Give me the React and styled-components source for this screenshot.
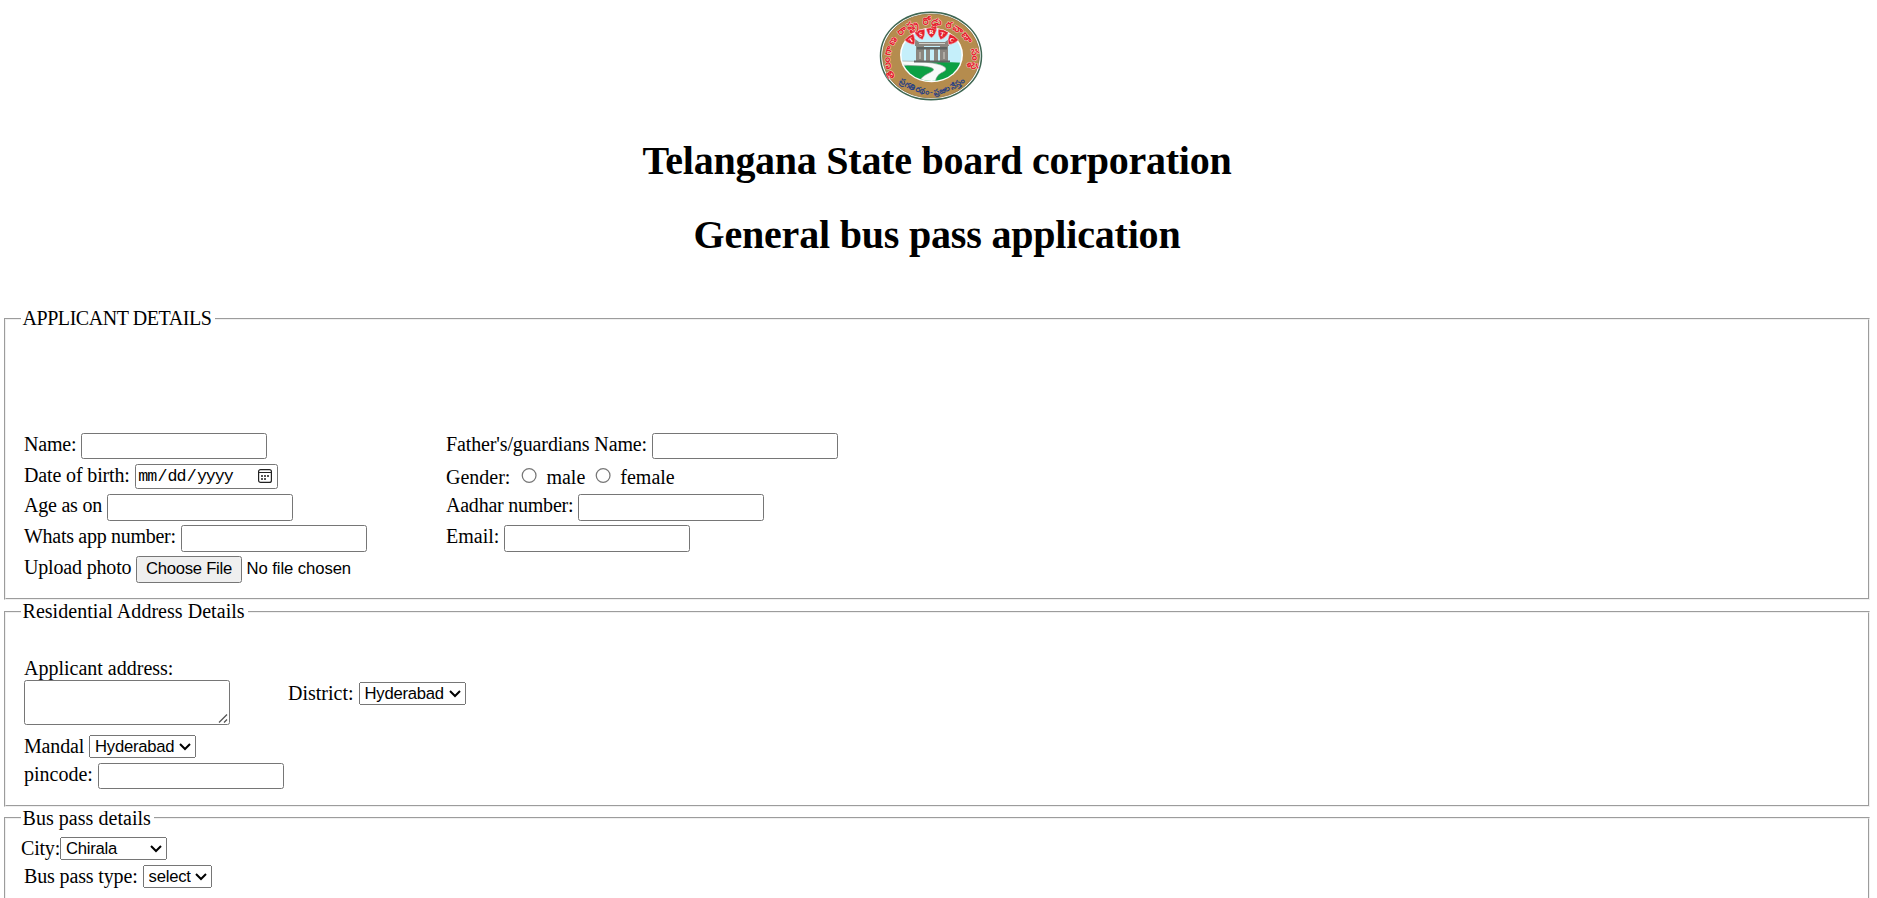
import React from 'react';
import styled, { createGlobalStyle, css } from 'styled-components';

const Global = createGlobalStyle`
  body {
    margin: 0;
    background: #fff;
    color: #000;
    font-family: "Liberation Serif", "Times New Roman", serif;
    font-size: 20px;
    line-height: 23px;
    overflow: hidden;
  }
`;

const Page = styled.main`
  height: 898px;
  overflow: hidden;
  box-sizing: border-box;
  padding: 10px 7px 0 4px;
`;

const Header = styled.header`
  display: flex;
  flex-direction: column;
  align-items: center;
  height: 297px;
`;

const Seal = styled.svg`
  width: 106px;
  height: 92px;
  margin-right: 10px;
`;

const Title = styled.h1`
  margin: 36px 0 0;
  font-size: 40px;
  line-height: 46px;
  font-weight: bold;
  letter-spacing: ${(p) => p.$spacing}px;
  & + & { margin-top: 28px; }
`;

const Section = styled.fieldset`
  margin: 0;
  min-width: 0;
  box-sizing: border-box;
  height: ${(p) => p.$height}px;
  padding: 0 15px;
  border: 2px groove rgb(240, 240, 240);
`;

const Legend = styled.legend`
  height: 23px;
  padding: 0 3.5px 0 1.5px;
  letter-spacing: ${(p) => p.$spacing ?? 0.04}px;
`;

const Table = styled.div`
  display: grid;
  grid-template-columns: 422px 1fr;
  grid-template-rows: 31px 30px 31px 31px 31px;
  padding: 103px 0 0 3px;
`;

const Field = styled.label`
  display: flex;
  align-items: flex-start;
  gap: ${(p) => p.$gap ?? 5}px;
  padding-left: ${(p) => p.$indent ?? 0}px;
  white-space: pre;
`;

const Caption = styled.span`
  padding-top: ${(p) => p.$drop ?? 0}px;
  letter-spacing: ${(p) => p.$spacing ?? 0}px;
`;

const control = css`
  zoom: 1.25;
  margin: 0;
  box-sizing: border-box;
  font-family: "Liberation Sans", Arial, sans-serif;
  font-size: 13.333px;
`;

const TextInput = styled.input`
  ${control}
  width: 148.8px;
  height: ${(p) => (p.$tall ? 21.6 : 20.8)}px;
  border: 1px solid #767676;
  border-radius: 2px;
`;

const Overlaid = styled.span`
  position: relative;
  display: inline-flex;
  align-self: flex-start;
`;

const DateInput = styled.input`
  ${control}
  width: 114.4px;
  height: 20px;
  border: 1px solid #767676;
  border-radius: 2px;
  font-family: "Liberation Mono", monospace;
  letter-spacing: -0.85px;
  &::-webkit-calendar-picker-indicator { opacity: 0; }
`;

const CalendarIcon = styled.svg`
  position: absolute;
  right: 6px;
  top: 5px;
  width: 14px;
  height: 14px;
  pointer-events: none;
`;

const Select = styled.select`
  ${control}
  width: ${(p) => p.$width / 1.25}px;
  height: 18.4px;
  letter-spacing: -0.2px;
`;

const FileInput = styled.input`
  ${control}
  width: 200px;
  height: 21.6px;
  letter-spacing: -0.06px;
  &::file-selector-button { letter-spacing: -0.2px; }
`;

const Radio = styled.input`
  ${control}
  width: 13px;
  height: 13px;
  margin: 3.2px 3px 0 4.8px;
  & ~ & { margin-left: 4px; }
`;

const TextArea = styled.textarea`
  ${control}
  width: 165px;
  height: 36px;
  border: 1px solid #767676;
  border-radius: 2px;
  resize: none;
`;

const Grip = styled.svg`
  position: absolute;
  right: 2px;
  bottom: 2px;
  width: 10px;
  height: 9px;
  pointer-events: none;
`;

const AddressRow = styled.div`
  display: flex;
  padding: 34px 0 0 3px;
  height: 104px;
  box-sizing: border-box;
`;

const Address = styled.label`
  display: flex;
  flex-direction: column;
  width: 264px;
`;

const District = styled.div`
  padding-top: 25px;
`;

const Stack = styled.div`
  display: grid;
  grid-template-rows: 28px 28px;
  padding: ${(p) => p.$top}px 0 0 ${(p) => p.$left ?? 0}px;
`;

const badges = [
  ['T', 32.5, 30.5, -35],
  ['S', 42, 25, -18],
  ['R', 52.5, 23, 0],
  ['T', 63, 25, 18],
  ['C', 72.5, 30.5, 35],
];

function Logo() {
  return (
    <Seal viewBox="0 0 106 92">
      <defs>
        <path id="top" d="M16.5 67A41 35 0 1 1 88 67" />
        <path id="bottom" d="M20 72Q52.5 97 85 72" />
        <clipPath id="view"><ellipse cx="52.5" cy="45" rx="30" ry="26" /></clipPath>
      </defs>
      <ellipse cx="52" cy="46" rx="50.5" ry="43.8" fill="#fff" stroke="#3e6652" strokeWidth="1.5" />
      <ellipse cx="52" cy="46" rx="48.5" ry="42" fill="#b58c4e" stroke="#8f7440" strokeWidth=".8" />
      <ellipse cx="52.5" cy="45" rx="31.5" ry="27.2" fill="#fff" />
      <g clipPath="url(#view)">
        <path d="M20 15H86V56H20Z" fill="#c5effa" />
        <path d="M20 57Q45 50 86 53V78H20Z" fill="#0ca044" />
        <path d="M20 51Q50 51 62 55Q72 59 62 63Q55 67 57 76H38Q40 67 52 62Q60 58 44 56L20 55Z" fill="#f7faf9" stroke="#8d9b93" strokeWidth=".6" />
      </g>
      <g fill="#8a867f">
        <path d="M36 29L40 32H66L70 29V36H36ZM37 36H45V52H37ZM61 36H69V52H61ZM47 39H51V52H47ZM55 39H59V52H55Z" />
        <path d="M38 37H68V39.5H38ZM35 50.5H71V52.5H35Z" fill="#5f6361" />
        <path d="M40 33.5H66M41 42V49M65 42V49" stroke="#d3d0c8" strokeWidth="1" />
      </g>
      {badges.map(([letter, x, y, turn]) => (
        <g key={x} transform={`translate(${x} ${y}) rotate(${turn})`}>
          <path d="M-5.4 -4.5Q0 -6 5.4 -4.5Q4.5 1.5 0 5Q-4.5 1.5 -5.4 -4.5Z" fill="#e5202e" stroke="#fff" strokeWidth=".4" />
          <text y="1.2" textAnchor="middle" fill="#fff" fontSize="6" fontWeight="bold">{letter}</text>
        </g>
      ))}
      <text fill="#e5202e" stroke="#f6dccb" strokeWidth=".8" paintOrder="stroke" fontSize="10" fontWeight="bold">
        <textPath href="#top" textLength="146">తెలంగాణ రాష్ట్ర రోడ్డు రవాణా సంస్థ</textPath>
      </text>
      <text fill="#263f86" fontSize="8" fontWeight="bold">
        <textPath href="#bottom" textLength="72">ప్రగతి రథం - ప్రజల నేస్తం</textPath>
      </text>
    </Seal>
  );
}

export default function App() {
  return (
    <>
      <Global />
      <Page>
        <Header>
          <Logo />
          <Title $spacing={-0.26}>Telangana State board corporation</Title>
          <Title $spacing={-0.19}>General bus pass application</Title>
        </Header>

        <Section $height={293}>
          <Legend $spacing={-0.44}>APPLICANT DETAILS</Legend>
          <Table>
            <Field><Caption $spacing={-0.2}>Name:</Caption><TextInput /></Field>
            <Field><Caption $spacing={-0.13}>Father's/guardians Name:</Caption><TextInput /></Field>
            <Field>
              <Caption $spacing={-0.14}>Date of birth:</Caption>
              <Overlaid>
                <DateInput type="date" />
                <CalendarIcon viewBox="0 0 14 14">
                  <rect x=".6" y=".6" width="12.8" height="12.8" rx="2" fill="none" stroke="#222" strokeWidth="1.2" />
                  <path d="M1 3.5H13" stroke="#222" />
                  <path d="M3 6h2v2H3zM6 6h2v2H6zM9 6h2v2H9zM3 9h2v2H3zM6 9h2v2H6z" fill="#555" />
                </CalendarIcon>
              </Overlaid>
            </Field>
            <Field>
              <Caption $drop={2}>Gender:</Caption>
              <Radio type="radio" name="gender" />
              <Caption $drop={2}>male</Caption>
              <Radio type="radio" name="gender" />
              <Caption $drop={2}>female</Caption>
            </Field>
            <Field><Caption $spacing={-0.22}>Age as on</Caption><TextInput $tall /></Field>
            <Field><Caption $spacing={-0.23}>Aadhar number:</Caption><TextInput $tall /></Field>
            <Field><Caption $spacing={-0.29}>Whats app number:</Caption><TextInput $tall /></Field>
            <Field><Caption>Email:</Caption><TextInput $tall /></Field>
            <Field><Caption $spacing={-0.17}>Upload photo</Caption><FileInput type="file" /></Field>
          </Table>
        </Section>

        <Section $height={206.5}>
          <Legend>Residential Address Details</Legend>
          <AddressRow>
            <Address>
              Applicant address:
              <Overlaid>
                <TextArea />
                <Grip viewBox="0 0 10 9">
                  <path d="M1 8.5L9 .5M6 8.5L9 5.5" stroke="#555" strokeWidth="1.3" />
                </Grip>
              </Overlaid>
            </Address>
            <District>
              <Field><Caption>District:</Caption><Select $width={107}><option>Hyderabad</option></Select></Field>
            </District>
          </AddressRow>
          <Stack $top={8} $left={3}>
            <Field><Caption $spacing={-0.17}>Mandal</Caption><Select $width={107}><option>Hyderabad</option></Select></Field>
            <Field><Caption>pincode:</Caption><TextInput /></Field>
          </Stack>
        </Section>

        <Section $height={200}>
          <Legend>Bus pass details</Legend>
          <Stack $top={7}>
            <Field $gap={0}><Caption $spacing={-0.2}>City:</Caption><Select $width={107}><option>Chirala</option></Select></Field>
            <Field $indent={3}><Caption $spacing={-0.14}>Bus pass type:</Caption><Select $width={69}><option>select</option></Select></Field>
          </Stack>
        </Section>
      </Page>
    </>
  );
}
